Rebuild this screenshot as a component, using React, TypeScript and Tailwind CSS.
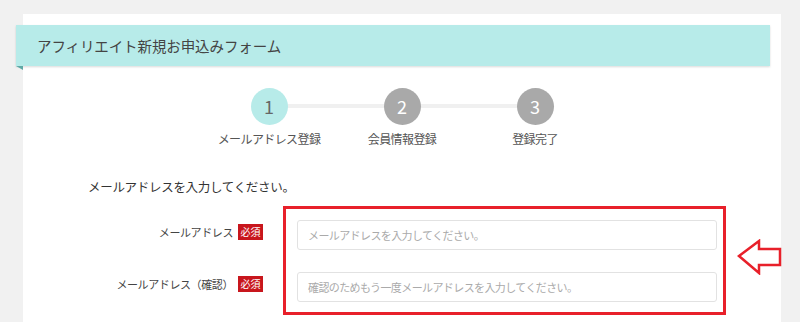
import React from "react";

const font = { fontFamily: '"Noto Sans CJK JP", "Noto Sans", sans-serif' };

function Step({ n, label, active }: { n: number; label: string; active?: boolean }) {
  return (
    <div className="relative z-10 flex w-[133px] flex-col items-center">
      <div
        className={
          active
            ? "flex h-[37px] w-[37px] items-center justify-center rounded-full bg-[#b7ebe9] text-[18px] text-[#666]"
            : "flex h-[37px] w-[37px] items-center justify-center rounded-full bg-[#a9a9a9] text-[18px] text-white"
        }
      >
        {n}
      </div>
      <div className="mt-[6px] text-[12px] leading-[16px] tracking-[-0.6px] text-[#555]">{label}</div>
    </div>
  );
}

function Badge() {
  return (
    <span className="ml-[5px] inline-flex h-[16px] w-[25px] items-center justify-center bg-[#c8161d] text-[10px] leading-none tracking-normal text-white">
      必須
    </span>
  );
}

export default function App() {
  return (
    <div style={font} className="h-[322px] w-[800px] overflow-hidden bg-[#f1f1f1] pl-[23px] pt-[14px]">
      <div className="relative h-[400px] w-[758px] bg-white pt-[11px]">
        {/* header */}
        <div className="relative -ml-[7px] flex h-[41px] w-[754px] items-center bg-[#b7ebe9] pl-[21px] text-[14.5px] tracking-[-0.1px] text-[#444] shadow-[0_1px_2px_rgba(0,0,0,0.15)]">
          アフィリエイト新規お申込みフォーム
          <div className="absolute left-0 top-[41px] h-0 w-0 border-l-[7px] border-t-[4px] border-l-transparent border-t-[#5fa9a6]" />
        </div>

        {/* stepper */}
        <div className="relative mt-[22px] flex justify-center">
          <div className="absolute left-1/2 top-[16px] h-[4px] w-[266px] -translate-x-1/2 bg-[#f0f0f0]" />
          <Step n={1} label="メールアドレス登録" active />
          <Step n={2} label="会員情報登録" />
          <Step n={3} label="登録完了" />
        </div>

        <div className="mt-[30px] pl-[65px] text-[12.5px] leading-[20px] tracking-[-0.3px] text-[#333]">
          メールアドレスを入力してください。
        </div>

        {/* form */}
        <div className="relative mt-[23px]">
          <div className="flex items-start">
            <div className="flex w-[240px] items-center justify-end pt-[4px] text-[11px] tracking-[-0.4px] text-[#444]">
              メールアドレス
              <Badge />
            </div>
            <div className="ml-[34px] flex h-[30px] w-[420px] items-center rounded-[3px] border border-[#e2e2e2] pl-[10px] text-[11px] tracking-[-0.6px] text-[#aaa]">
              メールアドレスを入力してください。
            </div>
          </div>
          <div className="mt-[22px] flex items-start">
            <div className="flex w-[240px] items-center justify-end pt-[4px] text-[11px] tracking-[-0.4px] text-[#444]">
              メールアドレス（確認）
              <Badge />
            </div>
            <div className="ml-[34px] flex h-[30px] w-[420px] items-center rounded-[3px] border border-[#e2e2e2] pl-[10px] text-[11px] tracking-[-0.6px] text-[#aaa]">
              確認のためもう一度メールアドレスを入力してください。
            </div>
          </div>

          {/* red annotation box */}
          <div className="pointer-events-none absolute left-[260px] top-[-14px] h-[109px] w-[443px] border-[3px] border-[#e8202a]" />
          {/* arrow */}
          <svg className="absolute left-[714px] top-[19px]" width="46" height="36" viewBox="0 0 46 36">
            <path
              d="M2 17 L22 2 L22 10 L43 10 L43 26 L22 26 L22 34 Z"
              fill="white"
              stroke="#e8202a"
              strokeWidth="2.5"
              strokeLinejoin="miter"
            />
          </svg>
        </div>
      </div>
    </div>
  );
}
